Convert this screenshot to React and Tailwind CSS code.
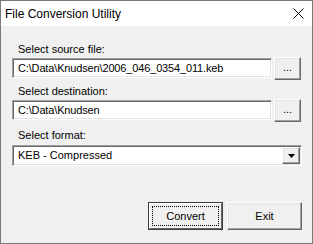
import React from 'react';

const sunken =
  'border border-t-[#a0a0a0] border-l-[#a0a0a0] border-b-white border-r-white bg-white shadow-[inset_1px_1px_0_#696969,inset_-1px_-1px_0_#e3e3e3]';
const raised =
  'border border-t-white border-l-white border-b-[#696969] border-r-[#696969] bg-[#f0f0f0] shadow-[inset_-1px_-1px_0_#a0a0a0,inset_1px_1px_0_#e3e3e3]';

const Label = ({ children, className = '' }) => (
  <div className={`h-[13px] text-[11px] leading-[13px] text-black ${className}`}>{children}</div>
);

const PathRow = ({ value, className = '' }) => (
  <div className={`flex h-[23px] gap-[2px] ${className}`}>
    <div className={`mt-[1px] flex h-[20px] w-[260px] items-center pl-[5px] text-[11px] tracking-[-0.15px] text-black ${sunken}`}>
      {value}
    </div>
    <button
      type="button"
      className={`flex h-[23px] w-[27px] items-center justify-center pb-[2px] text-[11px] text-black ${raised}`}
    >
      ...
    </button>
  </div>
);

export default function App() {
  return (
    <div
      className="flex h-[244px] w-[313px] flex-col border border-[#7a7a7a] bg-[#f0f0f0]"
      style={{ fontFamily: '"Liberation Sans", Arial, sans-serif' }}
    >
      <div className="flex h-[25px] items-center justify-between bg-white pl-[4px] pr-[8px]">
        <span className="text-[12px] leading-[14px] text-black">File Conversion Utility</span>
        <svg width="11" height="11" viewBox="0 0 11 11">
          <path d="M0.5 0.5 L10.5 10.5 M10.5 0.5 L0.5 10.5" stroke="#000" strokeWidth="1" />
        </svg>
      </div>

      <div className="flex flex-1 flex-col pl-[11px] pt-[17px]">
        <Label className="pl-[6px]">Select source file:</Label>
        <PathRow className="mt-[1px]" value="C:\Data\Knudsen\2006_046_0354_011.keb" />

        <Label className="mt-[5px] pl-[6px]">Select destination:</Label>
        <PathRow className="mt-[1px]" value="C:\Data\Knudsen" />

        <Label className="mt-[7px] pl-[6px]">Select format:</Label>
        <div className={`mt-[3px] flex h-[21px] w-[290px] items-center justify-between pl-[5px] pr-[1px] text-[11px] text-black ${sunken}`}>
          <span>KEB - Compressed</span>
          <div className={`flex h-[17px] w-[18px] items-center justify-center ${raised}`}>
            <svg width="7" height="4" viewBox="0 0 7 4">
              <polygon points="0,0 7,0 3.5,4" fill="#000" />
            </svg>
          </div>
        </div>

        <div className="mt-[36px] flex justify-end gap-[4px] pr-[10px]">
          <button
            type="button"
            className="h-[28px] w-[75px] border border-[#3c3c3c] bg-[#f0f0f0] p-0"
          >
            <div className="flex h-full w-full border border-t-white border-l-white border-b-[#696969] border-r-[#696969] p-[2px]">
              <div className="flex flex-1 items-center justify-center border border-dotted border-black text-[11px] text-black">
                Convert
              </div>
            </div>
          </button>
          <button
            type="button"
            className={`flex h-[28px] w-[75px] items-center justify-center text-[11px] text-black ${raised}`}
          >
            Exit
          </button>
        </div>
      </div>
    </div>
  );
}
